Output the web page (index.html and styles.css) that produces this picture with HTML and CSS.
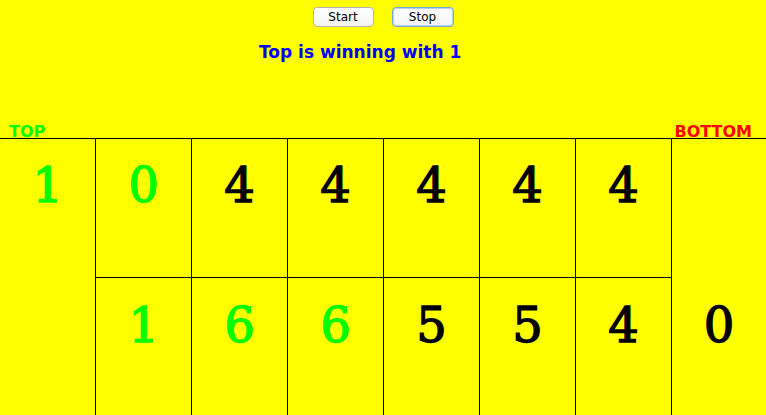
FILE: index.html
```html
<!DOCTYPE html>
<html>
<head>
<meta charset="utf-8">
<link rel="stylesheet" href="styles.css">
</head>
<body>
<div class="controls">
  <button class="btn">Start</button>
  <button class="btn btn-focus">Stop</button>
</div>
<div class="title">Top is winning with 1</div>
<div class="labels">
  <span class="label-top">TOP</span>
  <span class="label-bottom">BOTTOM</span>
</div>
<div class="board">
  <div class="store store-left green">1</div>
  <div class="pit pit-top green">0</div>
  <div class="pit pit-top">4</div>
  <div class="pit pit-top">4</div>
  <div class="pit pit-top">4</div>
  <div class="pit pit-top">4</div>
  <div class="pit pit-top">4</div>
  <div class="store store-right">0</div>
  <div class="pit pit-bottom green">1</div>
  <div class="pit pit-bottom green">6</div>
  <div class="pit pit-bottom green">6</div>
  <div class="pit pit-bottom">5</div>
  <div class="pit pit-bottom">5</div>
  <div class="pit pit-bottom">4</div>
</div>
</body>
</html>
```
FILE: styles.css
```css
html, body {
  margin: 0;
  padding: 0;
  background: #ffff00;
  width: 766px;
  height: 415px;
  overflow: hidden;
}
.controls {
  display: flex;
  justify-content: center;
  gap: 18px;
  padding-top: 7px;
  height: 20px;
}
.btn {
  width: 61px;
  height: 20px;
  margin: 0;
  padding: 0;
  box-sizing: border-box;
  font-family: "DejaVu Sans", sans-serif;
  font-size: 12px;
  line-height: 18px;
  color: #000;
  background: linear-gradient(#ffffff, #f4f4f4);
  border: 1px solid #b4b4b4;
  border-radius: 4px;
}
.btn-focus {
  width: 62px;
  border: 1px solid #7aa6d6;
  box-shadow: inset 0 0 0 1px #b4d2f2;
}
.title {
  margin-top: 15px;
  margin-left: 259px;
  font-family: "DejaVu Sans", sans-serif;
  font-weight: bold;
  font-size: 17px;
  line-height: 20px;
  color: #0000ff;
  height: 20px;
}
.labels {
  margin-top: 64px;
  height: 12px;
  display: flex;
  justify-content: space-between;
  align-items: flex-end;
  padding: 0 14px 0 9px;
  font-family: "DejaVu Sans", sans-serif;
  font-weight: bold;
  font-size: 16px;
  line-height: 12px;
}
.label-top { color: #00ff00; }
.label-bottom { color: #ff0000; }
.board {
  display: grid;
  grid-template-columns: 95px repeat(6, 96px) 95px;
  grid-template-rows: 139px 138px;
  border-top: 1px solid #000;
  font-family: "DejaVu Serif", serif;
  font-weight: normal;
  font-size: 48px;
  line-height: 56px;
  color: #000;
  text-align: center;
  -webkit-text-stroke: 1.4px currentColor;
}
.green { color: #00ff00; }
.store-left {
  grid-column: 1;
  grid-row: 1 / span 2;
  padding-top: 18px;
}
.store-right {
  grid-column: 8;
  grid-row: 1 / span 2;
  border-left: 1px solid #000;
  padding-top: 158px;
}
.pit {
  border-left: 1px solid #000;
}
.pit-top {
  grid-row: 1;
  border-bottom: 1px solid #000;
  padding-top: 18px;
}
.pit-bottom {
  grid-row: 2;
  padding-top: 19px;
}
```
